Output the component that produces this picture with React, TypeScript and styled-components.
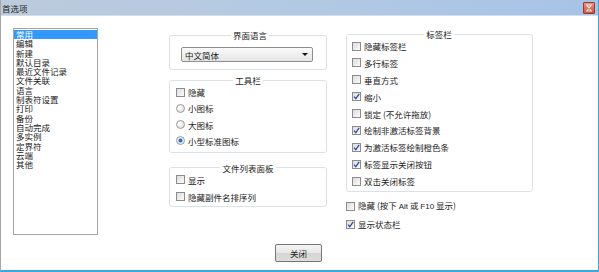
import styled, { createGlobalStyle } from 'styled-components';

const GlobalStyle = createGlobalStyle`
	html, body {
		margin: 0;
		padding: 0;
		background: #ffffff;
	}
	body {
		font-family: 'Noto Sans CJK SC', 'Liberation Sans', sans-serif;
		font-size: 8.5px;
		color: #1b1b1b;
	}
`;

const Window = styled.div`
	width: 597px;
	height: 270px;
	background: #ffffff;
	border-left: 1px solid #a4a8ad;
	border-right: 1px solid #3aa8e6;
	border-bottom: 2px solid #3aa8e6;
	display: flex;
	flex-direction: column;
	overflow: hidden;
`;

const TitleBar = styled.div`
	height: 16px;
	display: flex;
	align-items: center;
	justify-content: space-between;
	padding: 0 3px 0 1px;
	background: linear-gradient(to right, #bccbdc 0%, #b3c9e3 50%, #a6c3e8 100%);
	border-bottom: 1px solid #d3deeb;
	box-sizing: border-box;
`;

const TitleText = styled.span`
	font-size: 8.5px;
	line-height: 16px;
	color: #1e1e1e;
`;

const CloseBox = styled.div`
	width: 10px;
	height: 10px;
	display: flex;
	align-items: center;
	justify-content: center;
	border: 1px solid #9a3b2c;
	border-radius: 1px;
	background: linear-gradient(#e9947f, #c8513b);
`;

const Body = styled.div`
	flex: 1;
	display: flex;
	flex-direction: column;
	padding: 12px 0 0 12px;
`;

const Columns = styled.div`
	display: flex;
	align-items: flex-start;
`;

const ListBox = styled.ul`
	list-style: none;
	margin: 0;
	padding: 1px 0 0 0;
	width: 83px;
	height: 204px;
	border: 1px solid #a3a3a3;
	box-sizing: content-box;
`;

const ListItem = styled.li<{ $selected?: boolean }>`
	height: 9.3px;
	line-height: 9.3px;
	padding-left: 2px;
	white-space: nowrap;
	background: ${(p) => (p.$selected ? '#3399ff' : 'transparent')};
	color: ${(p) => (p.$selected ? '#ffffff' : '#1b1b1b')};
`;

const MiddleColumn = styled.div`
	width: 158px;
	margin-left: 71px;
	margin-top: 2px;
	display: flex;
	flex-direction: column;
`;

const RightColumn = styled.div`
	width: 187px;
	margin-left: 19px;
	margin-top: 1px;
	display: flex;
	flex-direction: column;
`;

const Group = styled.fieldset<{ $gap: number; $pad: string }>`
	margin: 0;
	padding: ${(p) => p.$pad};
	border: 1px solid #dae2e8;
	border-radius: 3px;
	display: flex;
	flex-direction: column;
	gap: ${(p) => p.$gap}px;
	min-width: 0;
`;

const Legend = styled.legend`
	margin: 0 auto;
	padding: 0 2px;
	font-size: 8.5px;
	line-height: 10px;
	color: #1b1b1b;
`;

const Spacer = styled.div<{ $h: number }>`
	height: ${(p) => p.$h}px;
`;

const Select = styled.div`
	width: 124px;
	height: 13px;
	border: 1px solid #8e8e8e;
	border-radius: 2px;
	background: linear-gradient(#fbfbfb, #e4e4e4);
	display: flex;
	align-items: center;
	justify-content: space-between;
	padding: 0 3px;
	box-sizing: content-box;
	margin-left: -3px;
`;

const Arrow = styled.span`
	width: 0;
	height: 0;
	border-left: 3px solid transparent;
	border-right: 3px solid transparent;
	border-top: 3px solid #111;
	margin-right: 1px;
`;

const Row = styled.label`
	height: 14px;
	display: flex;
	align-items: center;
	white-space: nowrap;
	line-height: 14px;
`;

const RowText = styled.span`
	white-space: pre;
`;

const Box = styled.span`
	width: 7px;
	height: 7px;
	border: 1px solid #8c8c8c;
	background: linear-gradient(135deg, #dcdcdc, #fbfbfb);
	margin-right: 3px;
	display: flex;
	align-items: center;
	justify-content: center;
	flex-shrink: 0;
`;

const Radio = styled.span<{ $checked?: boolean }>`
	width: 7px;
	height: 7px;
	border-radius: 50%;
	border: 1px solid #9a9a9a;
	background: ${(p) =>
		p.$checked
			? 'radial-gradient(circle, #2f6fc9 0, #2f6fc9 1.6px, #e6eef8 2.4px, #e6eef8 100%)'
			: 'radial-gradient(circle at 35% 35%, #ffffff, #d8d8d8)'};
	margin-right: 3px;
	flex-shrink: 0;
`;

const Latin = styled.span`
	font-family: 'Liberation Sans', sans-serif;
	font-size: 8px;
`;

const Footer = styled.div`
	display: flex;
	justify-content: center;
	padding-right: 14px;
	margin-top: 9px;
`;

const Button = styled.button`
	width: 47px;
	height: 18px;
	padding: 0;
	border: 1px solid #767676;
	border-radius: 2px;
	background: linear-gradient(#f4f4f4 0%, #e8e8e8 50%, #d6d6d6 51%, #dcdcdc 100%);
	font-family: 'Noto Sans CJK SC', sans-serif;
	font-size: 8.5px;
	color: #1b1b1b;
`;

const Check = () => (
	<svg width="7" height="7" viewBox="0 0 7 7">
		<path d="M1 3.6 L2.8 5.6 L6.2 0.8" fill="none" stroke="#2b4ea8" strokeWidth="1.3" />
	</svg>
);

const CheckBox = ({ checked, children }: { checked?: boolean; children: React.ReactNode }) => (
	<Row>
		<Box>{checked && <Check />}</Box>
		<RowText>{children}</RowText>
	</Row>
);

const RadioRow = ({ checked, children }: { checked?: boolean; children: React.ReactNode }) => (
	<Row>
		<Radio $checked={checked} />
		<RowText>{children}</RowText>
	</Row>
);

const items = [
	'常用',
	'编辑',
	'新建',
	'默认目录',
	'最近文件记录',
	'文件关联',
	'语言',
	'制表符设置',
	'打印',
	'备份',
	'自动完成',
	'多实例',
	'定界符',
	'云端',
	'其他',
];

const App = () => {
	return (
		<>
			<GlobalStyle />
			<Window>
				<TitleBar>
					<TitleText>首选项</TitleText>
					<CloseBox>
						<svg width="8" height="8" viewBox="0 0 8 8">
							<path d="M1 1 H7 M1 7 H7 M2 1.5 L6 6.5 M6 1.5 L2 6.5" stroke="#fbe3dc" strokeWidth="1.2" />
						</svg>
					</CloseBox>
				</TitleBar>
				<Body>
					<Columns>
						<ListBox>
							{items.map((item, index) => (
								<ListItem key={item} $selected={index === 0}>
									{item}
								</ListItem>
							))}
						</ListBox>
						<MiddleColumn>
							<Group $gap={0} $pad="7px 10px 7px 14px">
								<Legend>界面语言</Legend>
								<Select>
									<span>中文简体</span>
									<Arrow />
								</Select>
							</Group>
							<Spacer $h={5} />
							<Group $gap={2.3} $pad="0 6px 4px 6px">
								<Legend>工具栏</Legend>
								<CheckBox>隐藏</CheckBox>
								<RadioRow>小图标</RadioRow>
								<RadioRow>大图标</RadioRow>
								<RadioRow checked>小型标准图标</RadioRow>
							</Group>
							<Spacer $h={10} />
							<Group $gap={3} $pad="0 6px 2px 6px">
								<Legend>文件列表面板</Legend>
								<CheckBox>显示</CheckBox>
								<CheckBox>隐藏副件名排序列</CheckBox>
							</Group>
						</MiddleColumn>
						<RightColumn>
							<Group $gap={2.875} $pad="0 6px 3px 5px">
								<Legend>标签栏</Legend>
								<CheckBox>隐藏标签栏</CheckBox>
								<CheckBox>多行标签</CheckBox>
								<CheckBox>垂直方式</CheckBox>
								<CheckBox checked>缩小</CheckBox>
								<CheckBox>锁定 (不允许拖放)</CheckBox>
								<CheckBox checked>绘制非激活标签背景</CheckBox>
								<CheckBox checked>为激活标签绘制橙色条</CheckBox>
								<CheckBox checked>标签显示关闭按钮</CheckBox>
								<CheckBox>双击关闭标签</CheckBox>
							</Group>
							<Spacer $h={7} />
							<CheckBox>
								隐藏 (按下 <Latin>Alt</Latin> 或 <Latin>F10</Latin> 显示)
							</CheckBox>
							<Spacer $h={4} />
							<CheckBox checked>显示状态栏</CheckBox>
						</RightColumn>
					</Columns>
					<Footer>
						<Button>关闭</Button>
					</Footer>
				</Body>
			</Window>
		</>
	);
};

export default App;
